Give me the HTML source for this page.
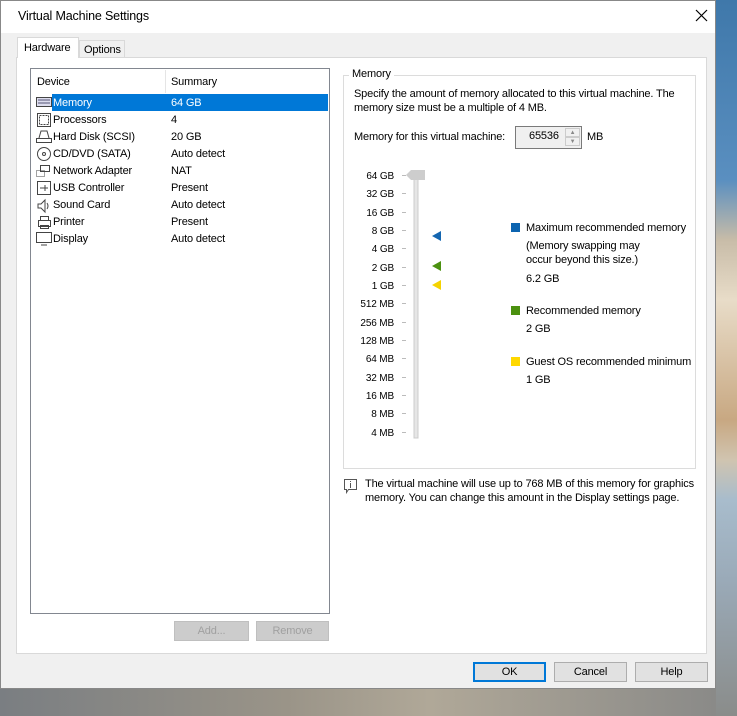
<!DOCTYPE html>
<html><head><meta charset="utf-8"><style>
*{margin:0;padding:0;box-sizing:border-box}
body{width:737px;height:716px;overflow:hidden;position:relative;font-family:"Liberation Sans",sans-serif;font-size:11px;letter-spacing:-0.15px;color:#000;
background:linear-gradient(180deg,#3f78aa 0,#5a8fc0 180px,#c8bca8 240px,#e8dcc8 300px,#c8a882 420px,#d0c4b0 460px,#a8bccc 500px,#9aaab8 580px,#8a8c8a 716px)}
.a{position:absolute;white-space:nowrap}
.dlg{position:absolute;left:0;top:0;width:716px;height:689px;background:#f0f0f0;border:1px solid #888}
.tb{position:absolute;left:0;top:0;width:714px;height:32px;background:#fff}
.btn{position:absolute;border:1px solid #adadad;background:#e1e1e1;text-align:center;line-height:18px;height:20px}
.bot{position:absolute;left:0;top:689px;width:716px;height:27px;background:linear-gradient(90deg,#7a7e82,#9a9488 40%,#b0a898 60%,#8a8a88)}
</style></head><body>
<div class="bot"></div>
<div class="dlg">
<div class="tb"></div>
<div class="a" style="left:17px;top:8px;font-size:12.5px">Virtual Machine Settings</div>
<svg class="a" style="left:694px;top:8px" width="13" height="13"><path d="M1 1L12 12M12 1L1 12" stroke="#000" stroke-width="1.2"/></svg>
<div class="a" style="left:15px;top:56px;width:691px;height:597px;background:#fff;border:1px solid #d9d9d9"></div>
<div class="a" style="left:16px;top:36px;width:62px;height:21px;background:#fff;border:1px solid #d9d9d9;border-bottom:none;padding:4px 0 0 6px">Hardware</div>
<div class="a" style="left:78px;top:39px;width:46px;height:17px;background:#f0f0f0;border:1px solid #d9d9d9;border-bottom:none;padding:3px 0 0 4px">Options</div>
<div class="a" style="left:29px;top:67px;width:300px;height:546px;border:1px solid #828790;background:#fff"></div>
<div class="a" style="left:164px;top:69px;width:1px;height:23px;background:#e5e5e5"></div>
<div class="a" style="left:36px;top:75px">Device</div>
<div class="a" style="left:170px;top:75px">Summary</div>
<div class="a" style="left:51px;top:93px;width:276px;height:17px;background:#0078d7"></div>
<div class="a" style="left:52px;top:95px;line-height:14px;color:#fff">Memory</div><div class="a" style="left:170px;top:95px;color:#fff;line-height:14px">64 GB</div>
<div class="a" style="left:52px;top:112px;line-height:14px">Processors</div><div class="a" style="left:170px;top:112px;line-height:14px">4</div>
<div class="a" style="left:52px;top:129px;line-height:14px">Hard Disk (SCSI)</div><div class="a" style="left:170px;top:129px;line-height:14px">20 GB</div>
<div class="a" style="left:52px;top:146px;line-height:14px">CD/DVD (SATA)</div><div class="a" style="left:170px;top:146px;line-height:14px">Auto detect</div>
<div class="a" style="left:52px;top:163px;line-height:14px">Network Adapter</div><div class="a" style="left:170px;top:163px;line-height:14px">NAT</div>
<div class="a" style="left:52px;top:180px;line-height:14px">USB Controller</div><div class="a" style="left:170px;top:180px;line-height:14px">Present</div>
<div class="a" style="left:52px;top:197px;line-height:14px">Sound Card</div><div class="a" style="left:170px;top:197px;line-height:14px">Auto detect</div>
<div class="a" style="left:52px;top:214px;line-height:14px">Printer</div><div class="a" style="left:170px;top:214px;line-height:14px">Present</div>
<div class="a" style="left:52px;top:231px;line-height:14px">Display</div><div class="a" style="left:170px;top:231px;line-height:14px">Auto detect</div>
<svg class="a" style="left:35px;top:94px" width="17" height="153" fill="none" stroke="#444" stroke-width="1">
<rect x="0.5" y="2.5" width="15" height="9" fill="#dde"/><path d="M2 5h12M2 8h12" stroke="#557"/>
<rect x="3.5" y="20.5" width="9" height="9" stroke-dasharray="2 1"/><rect x="1.5" y="18.5" width="13" height="13"/>
<path d="M0.5 43.5h15v4h-15zM3 43L5 36h6l2 7"/>
<circle cx="8" cy="59" r="6.5"/><circle cx="8" cy="59" r="1.5"/>
<rect x="4.5" y="70.5" width="9" height="6"/><rect x="0.5" y="75.5" width="8" height="6" stroke-dasharray="1 1"/>
<rect x="1.5" y="86.5" width="13" height="13"/><path d="M4 93h8M9 90v6"/>
<path d="M2 109h3l4-4v12l-4-4H2zM11 108q2 3 0 6"/>
<rect x="2.5" y="125.5" width="12" height="6"/><rect x="4.5" y="121.5" width="8" height="4"/><rect x="4.5" y="130.5" width="8" height="3"/>
<rect x="0.5" y="137.5" width="15" height="10"/><path d="M5 150h6"/>
</svg>
<div class="btn" style="left:173px;top:620px;width:75px;color:#a0a0a0;background:#ccc;border-color:#bfbfbf">Add...</div>
<div class="btn" style="left:255px;top:620px;width:73px;color:#a0a0a0;background:#ccc;border-color:#bfbfbf">Remove</div>
<div class="a" style="left:342px;top:74px;width:353px;height:394px;border:1px solid #dcdcdc"></div>
<div class="a" style="left:348px;top:67px;background:#fff;padding:0 3px">Memory</div>
<div class="a" style="left:353px;top:87px;line-height:13.5px">Specify the amount of memory allocated to this virtual machine. The<br>memory size must be a multiple of 4 MB.</div>
<div class="a" style="left:353px;top:130px">Memory for this virtual machine:</div>
<div class="a" style="left:514px;top:125px;width:67px;height:23px;border:1px solid #7a7a7a;background:#f0f0f0"></div>
<div class="a" style="left:528px;top:129px">65536</div>
<div class="a" style="left:564px;top:127px;width:15px;height:9px;border:1px solid #ccc;font-size:6px;text-align:center;color:#888;line-height:8px">▲</div>
<div class="a" style="left:564px;top:136px;width:15px;height:9px;border:1px solid #ccc;font-size:6px;text-align:center;color:#888;line-height:8px">▼</div>
<div class="a" style="left:586px;top:130px">MB</div>
<div class="a" style="left:349px;top:167px;width:44px;text-align:right;font-size:10px;line-height:18.35px">64 GB<br>32 GB<br>16 GB<br>8 GB<br>4 GB<br>2 GB<br>1 GB<br>512 MB<br>256 MB<br>128 MB<br>64 MB<br>32 MB<br>16 MB<br>8 MB<br>4 MB</div>
<svg class="a" style="left:399px;top:164px" width="50" height="280">
<g stroke="#bbb"><path d="M2 10.5h4M2 28.5h4M2 47.5h4M2 65.5h4M2 83.5h4M2 102.5h4M2 120.5h4M2 138.5h4M2 157.5h4M2 175.5h4M2 193.5h4M2 212.5h4M2 230.5h4M2 248.5h4M2 267.5h4"/></g>
<rect x="14" y="10" width="4" height="263" fill="#e6e6e6" stroke="#ccc"/>
<path d="M6 10l5-5h14v10h-14z" fill="#cdcdcd"/>
<path d="M32 71l9-5v10z" fill="#1466b0"/><path d="M32 101l9-5v10z" fill="#4b9110"/><path d="M32 120l9-5v10z" fill="#f5d300"/>
</svg>
<div class="a" style="left:510px;top:222px;width:9px;height:9px;background:#0c64b0"></div>
<div class="a" style="left:525px;top:221px">Maximum recommended memory</div>
<div class="a" style="left:525px;top:239px;line-height:13.5px">(Memory swapping may<br>occur beyond this size.)</div>
<div class="a" style="left:525px;top:272px">6.2 GB</div>
<div class="a" style="left:510px;top:305px;width:9px;height:9px;background:#4b9110"></div>
<div class="a" style="left:525px;top:304px">Recommended memory</div>
<div class="a" style="left:525px;top:322px">2 GB</div>
<div class="a" style="left:510px;top:356px;width:9px;height:9px;background:#ffd800"></div>
<div class="a" style="left:525px;top:355px">Guest OS recommended minimum</div>
<div class="a" style="left:525px;top:373px">1 GB</div>
<svg class="a" style="left:342px;top:477px" width="15" height="16" fill="none" stroke="#555"><path d="M1.5 1.5h12v10h-8l-2 3v-3h-2z"/><path d="M7.5 5v5M7.5 3v1"/></svg>
<div class="a" style="left:364px;top:477px;line-height:13.5px">The virtual machine will use up to 768 MB of this memory for graphics<br>memory. You can change this amount in the Display settings page.</div>
<div class="btn" style="left:472px;top:661px;width:73px;border:2px solid #0078d7;line-height:16px">OK</div>
<div class="btn" style="left:553px;top:661px;width:73px">Cancel</div>
<div class="btn" style="left:634px;top:661px;width:73px">Help</div>
</div>
</body></html>
